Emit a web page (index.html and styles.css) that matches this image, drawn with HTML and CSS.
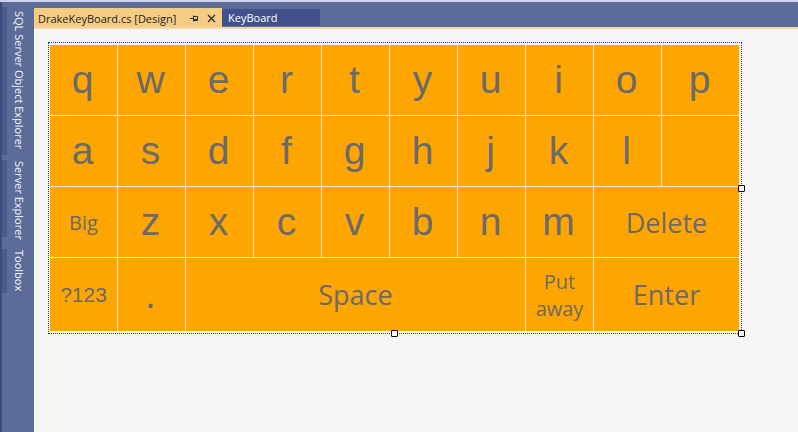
FILE: index.html
```html
<!DOCTYPE html>
<html>
<head>
<meta charset="utf-8">
<link rel="stylesheet" href="styles.css">
</head>
<body>
<div class="topline"></div>
<div class="app">
  <aside class="sidebar">
    <div class="vtab t1">SQL Server Object Explorer</div>
    <div class="vtab t2">Server Explorer</div>
    <div class="vtab t3">Toolbox</div>
  </aside>
  <main class="main">
    <div class="tabwell">
      <div class="doctab active">
        <span class="title">DrakeKeyBoard.cs [Design]</span>
        <svg class="pin" width="9" height="9" viewBox="0 0 9 9"><path d="M0 4.5H3.5M3.5 1.5V7.5M3.5 2.5H7.5V6.5H3.5M3.5 5.5H7.5" fill="none" stroke="#2d2d2d" stroke-width="1"/></svg>
        <svg class="close" width="9" height="9" viewBox="0 0 9 9"><path d="M1 1L8 8M8 1L1 8" fill="none" stroke="#2d2d2d" stroke-width="1.3"/></svg>
      </div>
      <div class="doctab inactive">KeyBoard</div>
    </div>
    <div class="tabline"></div>
    <div class="surface">
      <div class="selection">
        <div class="keyboard">
          <div class="key letter">q</div>
          <div class="key letter">w</div>
          <div class="key letter">e</div>
          <div class="key letter">r</div>
          <div class="key letter">t</div>
          <div class="key letter">y</div>
          <div class="key letter">u</div>
          <div class="key letter">i</div>
          <div class="key letter">o</div>
          <div class="key letter">p</div>

          <div class="key letter">a</div>
          <div class="key letter">s</div>
          <div class="key letter">d</div>
          <div class="key letter">f</div>
          <div class="key letter">g</div>
          <div class="key letter">h</div>
          <div class="key letter">j</div>
          <div class="key letter">k</div>
          <div class="key letter">l</div>
          <div class="key"></div>

          <div class="key small">Big</div>
          <div class="key letter">z</div>
          <div class="key letter">x</div>
          <div class="key letter">c</div>
          <div class="key letter">v</div>
          <div class="key letter">b</div>
          <div class="key letter">n</div>
          <div class="key letter">m</div>
          <div class="key word span2">Delete</div>

          <div class="key num">?123</div>
          <div class="key letter">.</div>
          <div class="key word span5">Space</div>
          <div class="key small two">Put<br>away</div>
          <div class="key word span2">Enter</div>
        </div>
        <span class="handle h-right"></span>
        <span class="handle h-bottom"></span>
        <span class="handle h-corner"></span>
      </div>
    </div>
  </main>
</div>
</body>
</html>
```

FILE: styles.css
```css
html, body {
  margin: 0;
  padding: 0;
  overflow: hidden;
}

body {
  width: 798px;
  height: 432px;
  background: #f5f5f5;
  font-family: "Open Sans", "Noto Sans", sans-serif;
}

.topline {
  height: 2px;
  background: #ccd3ec;
}

.app {
  display: flex;
  height: 430px;
}

.sidebar {
  flex: none;
  width: 32px;
  background: #5d6b99;
  border-left: 2px solid #3e4b7c;
  padding-top: 5px;
  display: flex;
  flex-direction: column;
  align-items: flex-start;
}

.vtab {
  box-sizing: border-box;
  writing-mode: vertical-rl;
  border-left: 5px solid #4b598b;
  padding: 4px 0 0 5px;
  font-size: 11px;
  line-height: 14px;
  color: #f4f5fa;
  white-space: nowrap;
}

.t1 { height: 148px; }
.t2 { height: 77px; margin-top: 5px; padding-top: 1px; }
.t3 { height: 44px; margin-top: 12px; padding-top: 1px; }

.main {
  flex: 1;
  display: flex;
  flex-direction: column;
  min-width: 0;
}

.tabwell {
  height: 25px;
  background: #5d6b99;
  display: flex;
  align-items: flex-end;
}

.doctab {
  box-sizing: border-box;
  display: flex;
  align-items: center;
  font-size: 11px;
  line-height: 15px;
  white-space: nowrap;
}

.doctab.active {
  height: 19px;
  width: 188px;
  background: #f5cc84;
  color: #1e1e1e;
  padding: 1px 0 0 4px;
}

.doctab .pin {
  margin-left: 14px;
}

.doctab .close {
  margin-left: 8px;
}

.doctab.inactive {
  height: 17px;
  width: 98px;
  margin-bottom: 1px;
  background: #40518b;
  color: #ffffff;
  padding-left: 6px;
}

.tabline {
  height: 2px;
  background: #f5d8a9;
}

.surface {
  flex: 1;
  background: #f5f5f5;
  padding: 13px 0 0 14px;
}

.selection {
  position: relative;
  width: fit-content;
  border: 1px dotted #3a3a44;
  padding: 2px 2px 2px 1px;
}

.keyboard {
  display: grid;
  grid-template-columns: repeat(9, 67px) 77px;
  grid-template-rows: 70px 70px 70px 73px;
  gap: 1px;
  background: #fdeccd;
}

.key {
  background: #ffa500;
  color: #6a6a6a;
  display: flex;
  align-items: center;
  justify-content: center;
  text-align: center;
}

.letter {
  font-family: "Liberation Sans", Arial, sans-serif;
  font-size: 39px;
  padding-right: 2px;
}

.num {
  font-family: "Liberation Sans", Arial, sans-serif;
  font-size: 21px;
}

.small {
  font-size: 20px;
}

.two {
  line-height: 27px;
}

.word {
  font-size: 27px;
}

.span2 { grid-column: span 2; }
.span5 { grid-column: span 5; }

.handle {
  position: absolute;
  box-sizing: border-box;
  width: 7px;
  height: 7px;
  background: #ffffff;
  border: 1px solid #000000;
  border-radius: 1px;
}

.h-right {
  right: -4px;
  top: 142px;
}

.h-bottom {
  left: 342px;
  bottom: -4px;
}

.h-corner {
  right: -4px;
  bottom: -4px;
}
```
